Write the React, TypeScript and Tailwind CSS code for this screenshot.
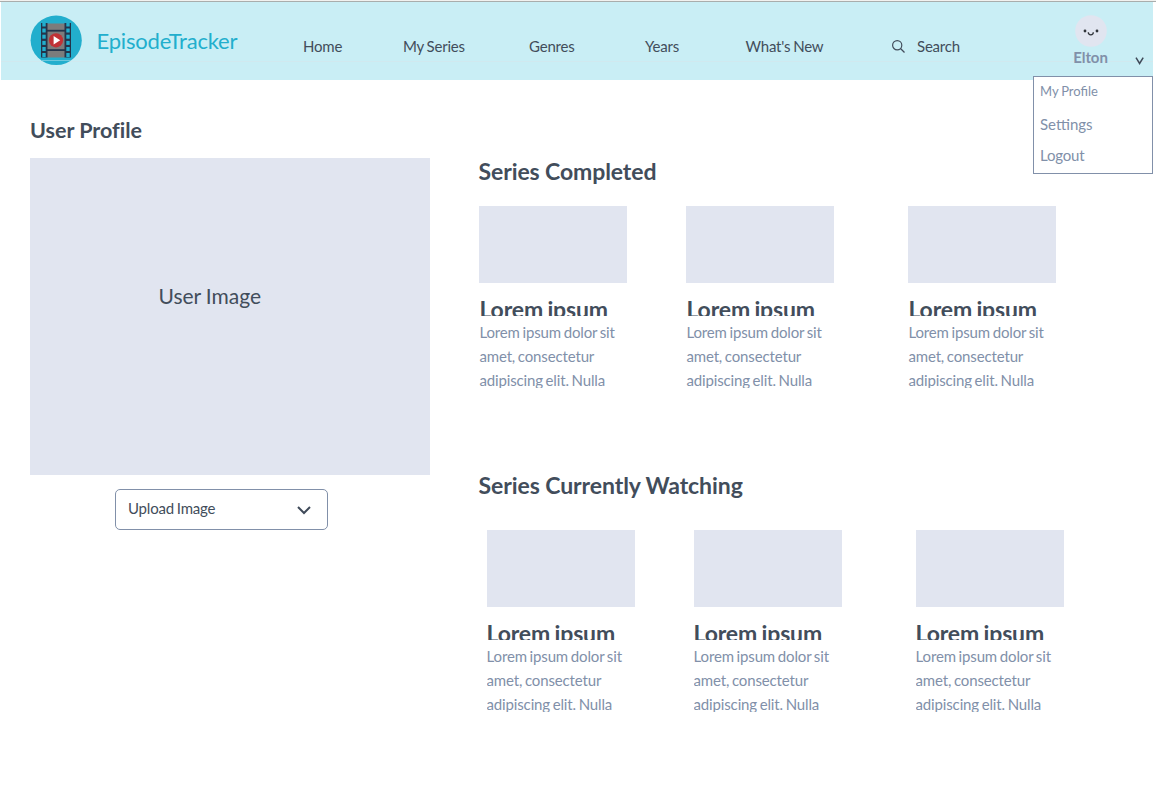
function Logo() {
  return (
    <svg className="mt-[13px] h-[51px] w-[52px] shrink-0" viewBox="0 0 52 51">
      <ellipse cx="26.2" cy="25.3" rx="25.6" ry="24.8" fill="#22aecd" />
      <rect x="17" y="8.500" width="18" height="34" fill="#7c7c7c" />
      <g fill="#24344a">
        <rect x="11" y="8" width="6.500" height="34.500" />
        <rect x="34.500" y="8" width="6.500" height="34.500" />
        <rect x="16" y="14.800" width="20" height="1.800" />
        <rect x="16" y="34.200" width="20" height="1.800" />
      </g>
      <g fill="#22aecd">
        {[8, 13.5, 19.7, 25.9, 32, 38].map((y) => (
          <g key={y}>
            <rect x="12.300" y={y} width="3.400" height={y === 8 ? 3.5 : 4} />
            <rect x="36.300" y={y} width="3.400" height={y === 8 ? 3.5 : 4} />
          </g>
        ))}
      </g>
      <circle cx="26" cy="25.300" r="7.100" fill="#c03236" />
      <path d="M23.600 21 L30.200 25.300 L23.600 29.600 Z" fill="#fff" />
      <path d="M11 45.500 H41" stroke="#6cc8dc" strokeWidth="1" />
    </svg>
  );
}

function Card() {
  return (
    <article className="w-[148px]">
      <div className="h-[77px] bg-[#e1e5f0]" />
      <h3 className="mt-[15px] h-[18px] overflow-hidden text-[23px] leading-[32px] font-bold tracking-[-0.15px] whitespace-nowrap [word-spacing:-1px]">
        <span className="-mt-[5px] block">Lorem ipsum</span>
      </h3>
      <p className="mt-[4px] h-[68px] overflow-hidden text-[15px] leading-6 tracking-[-0.14px] text-[#8190a9] [word-spacing:-1px]">
        Lorem ipsum dolor sit
        <br />
        amet, consectetur
        <br />
        adipiscing elit. Nulla
      </p>
    </article>
  );
}

function Cards() {
  return (
    <div className="grid grid-cols-[207px_222px_148px]">
      <Card />
      <Card />
      <Card />
    </div>
  );
}

export default function App() {
  return (
    <div className="relative h-[793px] w-[1156px] overflow-hidden bg-white font-['Lato',sans-serif] text-[#424d5b]">
      <div className="h-[2px] border-b border-[#a9adac] bg-[#f1f1ef]" />
      <header className="relative ml-px flex h-[78px] w-[1152px] bg-[#c9eef5] pl-[29px]">
        <div className="absolute top-[59px] left-0 h-px w-full bg-[#d0e9ef]" />
        <div className="relative flex w-[273px]">
          <Logo />
          <span className="mt-[24px] ml-[14.500px] text-[22px] leading-[30px] tracking-[-0.18px] whitespace-nowrap text-[#22aecd]">EpisodeTracker</span>
        </div>
        <nav className="relative mt-[32px] grid grid-cols-[100px_126px_116px_100.500px_146.500px_180.500px] text-[15px] leading-6 tracking-[-0.2px] whitespace-nowrap [word-spacing:-0.800px]">
          <a>Home</a>
          <a>My Series</a>
          <a>Genres</a>
          <a>Years</a>
          <a>What's New</a>
          <a className="flex">
            <svg className="mt-[6px] mr-[12px] h-[13px] w-[13px]" viewBox="0 0 13 13" fill="none" stroke="#424d5b" strokeWidth="1.200">
              <circle cx="5.200" cy="5.200" r="4.600" />
              <path d="M8.500 8.500 L12.500 12.500" />
            </svg>
            Search
          </a>
        </nav>
        <div className="relative mt-[13px] flex w-[36px] flex-col items-center">
          <svg className="h-[32px] w-[32px] shrink-0" viewBox="0 0 32 32">
            <circle cx="16" cy="16" r="15.800" fill="#e1e5f0" />
            <circle cx="10" cy="16" r="1.400" fill="#30343a" />
            <circle cx="22" cy="16" r="1.400" fill="#30343a" />
            <path d="M13.300 17.300 Q13.300 19.800 15.800 19.800 Q18.300 19.800 18.300 17.300" fill="none" stroke="#30343a" strokeWidth="1.300" />
          </svg>
          <span className="-mt-[2px] text-[15px] leading-6 font-bold tracking-[-0.05px] text-[#8190a9]">Elton</span>
        </div>
        <svg className="relative mt-[55px] ml-[26px] h-[8px] w-[9px]" viewBox="0 0 9 8" fill="none" stroke="#3f4a59" strokeWidth="1.500">
          <path d="M1 0.600 L4.600 6.500 L8.200 0.600" />
        </svg>
        <div className="absolute top-[74px] left-[1032px] z-10 h-[98px] w-[120px] border border-[#8190a9] bg-white pl-[6px] text-[15px] text-[#8190a9]">
          <div className="mt-[2px] text-[13px] leading-6 [word-spacing:-0.500px]">My Profile</div>
          <div className="mt-[9px] leading-6">Settings</div>
          <div className="mt-[7px] leading-6 tracking-[-0.2px]">Logout</div>
        </div>
      </header>
      <main className="flex pl-[30px]">
        <section className="w-[400px] pt-[35px]">
          <h1 className="text-[21.500px] leading-[30px] font-bold tracking-[-0.01px] [font-variant-ligatures:common-ligatures]">User Profile</h1>
          <div className="mt-[13px] h-[317px] bg-[#e1e5f0] pt-[123px] pl-[128.500px] text-[21px] leading-[30px] [word-spacing:-0.500px]">User Image</div>
          <button className="mt-[14px] ml-[85px] flex h-[41px] w-[213px] items-center justify-between rounded-[5px] border border-[#8190a9] pr-[16px] pb-[3px] pl-[12px] text-[15px] leading-6 tracking-[-0.2px] [word-spacing:-0.800px]">
            Upload Image
            <svg className="mt-[5px] h-[9px] w-[14px]" viewBox="0 0 14 9" fill="none" stroke="#3f4a59" strokeWidth="2">
              <path d="M1 1 L7 7 L13 1" />
            </svg>
          </button>
        </section>
        <section className="ml-[48.500px] w-[590px] pt-[75px]">
          <h2 className="text-[23px] leading-8 font-bold tracking-[-0.1px]">Series Completed</h2>
          <div className="mt-[19px] ml-[0.900px]">
            <Cards />
          </div>
          <h2 className="mt-[81px] text-[23px] leading-8 font-bold tracking-[-0.08px]">Series Currently Watching</h2>
          <div className="mt-[29px] ml-[8px]">
            <Cards />
          </div>
        </section>
      </main>
    </div>
  );
}
